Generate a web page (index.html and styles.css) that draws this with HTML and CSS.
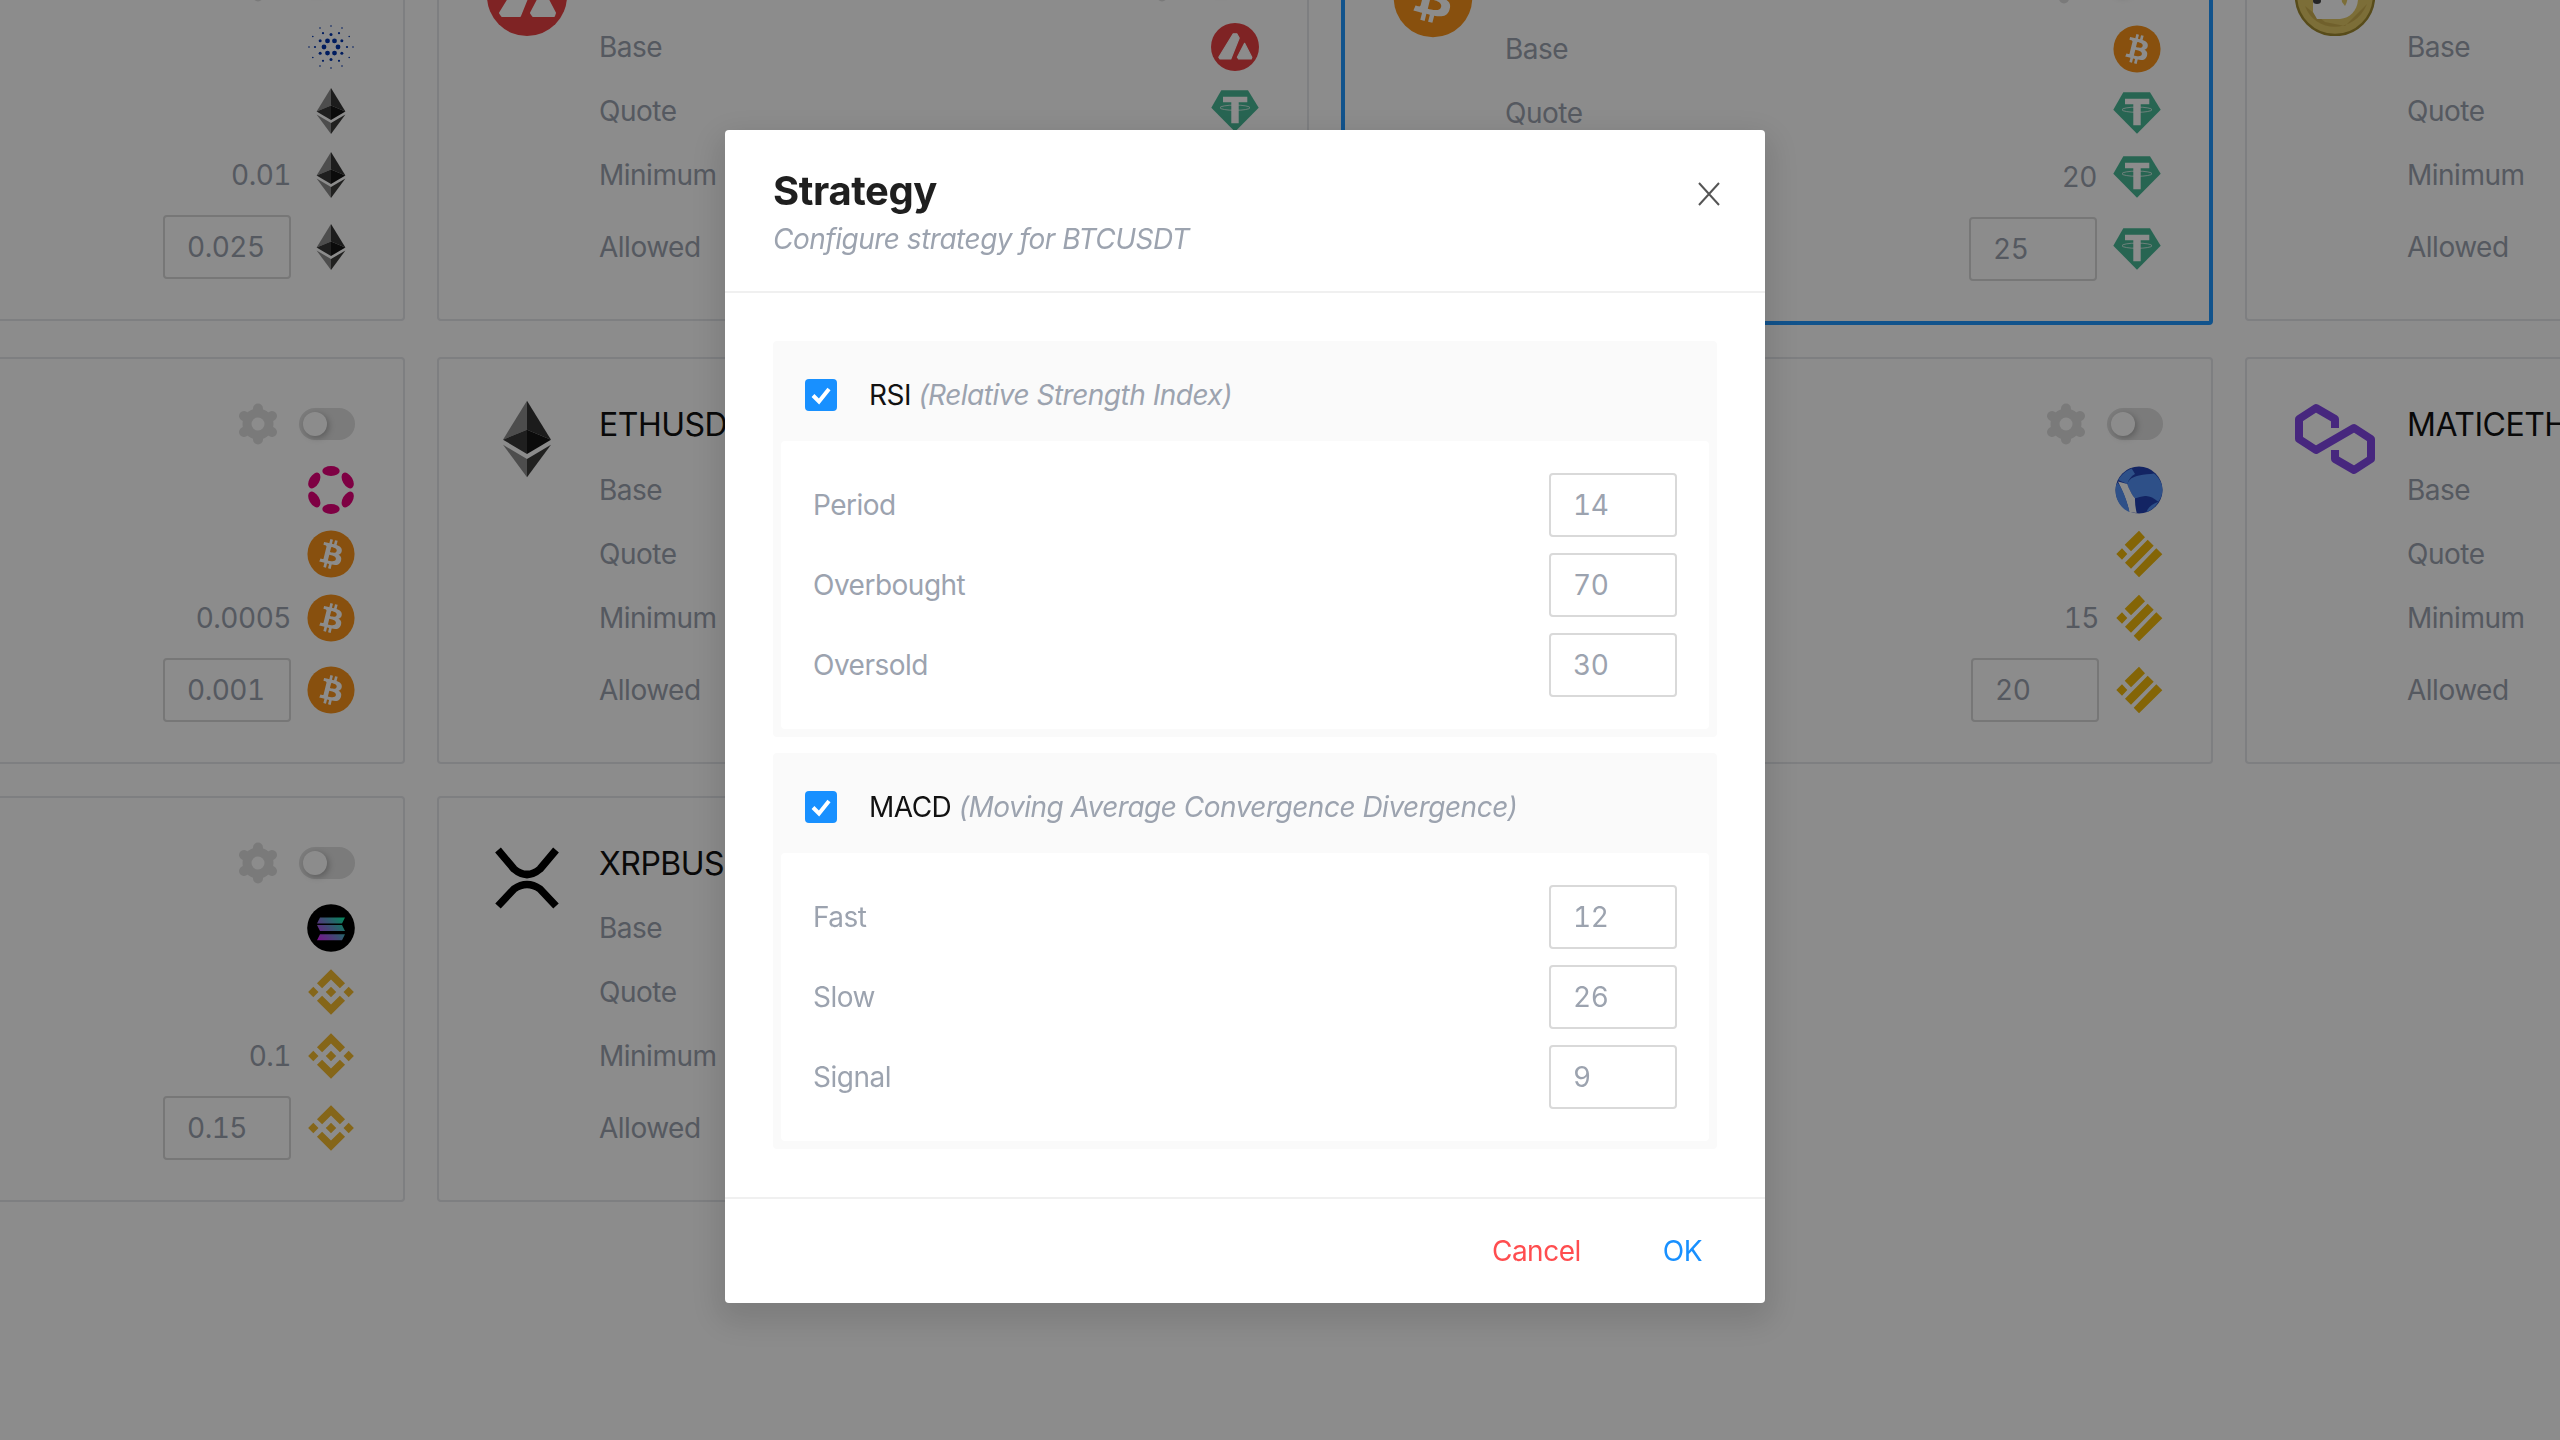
FILE: index.html
```html
<!DOCTYPE html>
<html lang="en">
<head>
    <meta charset="utf-8">
    <title>Strategy</title>
    <link rel="stylesheet" href="styles.css">
</head>
<body>

    <!-- coin icons, used through <use> below -->
    <svg class="sprite" xmlns="http://www.w3.org/2000/svg">
        <defs>
            <linearGradient id="sol_grad" gradientUnits="userSpaceOnUse" x1="38" y1="13" x2="10" y2="36">
                <stop offset="0" stop-color="#00ffa3"/>
                <stop offset="1" stop-color="#dc1fff"/>
            </linearGradient>
        </defs>
        <symbol id="gear" viewBox="0 0 40 42">
            <g stroke="#dfdfdf" stroke-width="10" stroke-linecap="round">
                <line x1="20" y1="21" x2="20" y2="5.500"/>
                <line x1="20" y1="21" x2="20" y2="36.500"/>
                <line x1="20" y1="21" x2="6" y2="13"/>
                <line x1="20" y1="21" x2="34" y2="13"/>
                <line x1="20" y1="21" x2="6" y2="29"/>
                <line x1="20" y1="21" x2="34" y2="29"/>
            </g>
            <circle cx="20" cy="21" r="15.500" fill="#dfdfdf"/>
            <circle cx="20" cy="21" r="6.500" fill="#fff"/>
        </symbol>
        <symbol id="ada" viewBox="0 0 48 48">
            <g fill="#0033ad">
                <circle cx="31" cy="24" r="2.4"/><circle cx="27.5" cy="30.06" r="2.4"/><circle cx="20.5" cy="30.06" r="2.4"/>
                <circle cx="17" cy="24" r="2.4"/><circle cx="20.5" cy="17.94" r="2.4"/><circle cx="27.5" cy="17.94" r="2.4"/>
                <circle cx="34.83" cy="30.25" r="1.5"/><circle cx="24" cy="36.5" r="1.5"/><circle cx="13.17" cy="30.25" r="1.5"/>
                <circle cx="13.17" cy="17.75" r="1.5"/><circle cx="24" cy="11.5" r="1.5"/><circle cx="34.83" cy="17.75" r="1.5"/>
                <circle cx="40" cy="24" r="1.1"/><circle cx="32" cy="37.86" r="1.1"/><circle cx="16" cy="37.86" r="1.1"/>
                <circle cx="8" cy="24" r="1.1"/><circle cx="16" cy="10.14" r="1.1"/><circle cx="32" cy="10.14" r="1.1"/>
                <circle cx="46" cy="24" r=".8"/><circle cx="35" cy="43.05" r=".8"/><circle cx="13" cy="43.05" r=".8"/>
                <circle cx="2" cy="24" r=".8"/><circle cx="13" cy="4.95" r=".8"/><circle cx="35" cy="4.95" r=".8"/>
                <circle cx="42.19" cy="34.5" r=".8"/><circle cx="24" cy="45" r=".8"/><circle cx="5.81" cy="34.5" r=".8"/>
                <circle cx="5.81" cy="13.5" r=".8"/><circle cx="24" cy="3" r=".8"/><circle cx="42.19" cy="13.5" r=".8"/>
            </g>
        </symbol>
        <symbol id="eth" viewBox="0 0 48 48">
            <path fill="#8c8c8c" d="M24 1 9.6 24.4 24 18.4Z"/>
            <path fill="#343434" d="M24 1 38.4 24.4 24 18.4Z"/>
            <path fill="#393939" d="M24 18.4 9.6 24.4 24 33Z"/>
            <path fill="#141414" d="M24 18.4 38.4 24.4 24 33Z"/>
            <path fill="#8c8c8c" d="M9.6 27.5 24 47V36Z"/>
            <path fill="#3c3c3b" d="M38.4 27.5 24 47V36Z"/>
        </symbol>
        <symbol id="dot" viewBox="0 0 48 48">
            <g fill="#e6007a">
                <ellipse cx="24" cy="5" rx="8.7" ry="5"/>
                <ellipse cx="24" cy="43" rx="8.7" ry="5"/>
                <ellipse cx="7.3" cy="14.5" rx="8.7" ry="5" transform="rotate(-60 7.3 14.5)"/>
                <ellipse cx="40.7" cy="14.5" rx="8.7" ry="5" transform="rotate(60 40.7 14.5)"/>
                <ellipse cx="7.3" cy="33.5" rx="8.7" ry="5" transform="rotate(60 7.3 33.5)"/>
                <ellipse cx="40.7" cy="33.5" rx="8.7" ry="5" transform="rotate(-60 40.7 33.5)"/>
            </g>
        </symbol>
        <symbol id="btc" viewBox="0 0 32 32">
            <circle cx="16" cy="16" r="15.7" fill="#f7931a"/>
            <path fill="#fff" d="M23.189 14.02c.314-2.096-1.283-3.223-3.465-3.975l.708-2.84-1.728-.43-.69 2.765c-.454-.114-.92-.22-1.385-.326l.695-2.783L15.596 6l-.708 2.839c-.376-.086-.746-.17-1.104-.26l.002-.009-2.384-.595-.46 1.846s1.283.294 1.256.312c.7.175.826.638.805 1.006l-.806 3.235c.048.012.11.03.18.057l-.183-.045-1.13 4.532c-.086.212-.303.531-.793.41.018.025-1.256-.313-1.256-.313l-.858 1.978 2.25.561c.418.105.828.215 1.231.318l-.715 2.872 1.727.43.708-2.84c.472.127.93.245 1.378.357l-.706 2.828 1.728.43.715-2.866c2.948.558 5.164.333 6.097-2.333.752-2.146-.037-3.385-1.588-4.192 1.13-.26 1.98-1.003 2.207-2.538zm-3.95 5.538c-.533 2.147-4.148.986-5.32.695l.95-3.805c1.172.293 4.929.872 4.37 3.11zm.535-5.569c-.487 1.953-3.495.96-4.47.717l.86-3.45c.975.243 4.118.696 3.61 2.733z"/>
        </symbol>
        <symbol id="usdt" viewBox="0 0 48 48">
            <path fill="#48b896" d="M10.3 3.3H37L47.7 20.7 24 44.7.3 20.7Z"/>
            <path fill="#fff" d="M12 9.7H36.3V15.3H27.7V36.3H20.3V15.3H12Z"/>
            <ellipse cx="24" cy="20.7" rx="15" ry="2.6" fill="none" stroke="#fff" stroke-width=".7"/>
        </symbol>
        <symbol id="bnb" viewBox="5.5 5.5 21 21">
            <path fill="#f3ba2f" d="M12.116 14.404L16 10.52l3.886 3.886 2.26-2.26L16 6l-6.144 6.144 2.26 2.26zM6 16l2.26-2.26L10.52 16l-2.26 2.26L6 16zm6.116 1.596L16 21.48l3.886-3.886 2.26 2.259L16 26l-6.144-6.144-.003-.003 2.263-2.257zM21.48 16l2.26-2.26L26 16l-2.26 2.26L21.48 16zm-3.188-.002h.002V16L16 18.294l-2.291-2.29-.004-.004.004-.003.401-.402.195-.195L16 13.706l2.293 2.293z"/>
        </symbol>
        <symbol id="busd" viewBox="0 0 48 48">
            <path fill="#f0b90b" d="M24 .7 30 7.3 16 21.3 9.7 14.7ZM7 18.3 12.3 24 7 29.7 1.3 24ZM32.7 9.7 38.7 15.7 16 38.7 10 32.7ZM41.3 18.3 47.3 24.3 24 47.3 18.7 41.7Z"/>
        </symbol>
        <symbol id="luna" viewBox="0 0 48 48">
            <circle cx="24" cy="24" r="23.5" fill="#2443b4"/>
            <path fill="#5493f7" d="M12.3 18C14 13 18 10.7 24 9.500 29 8.500 35 8 39 7.500 44 11.500 47.500 17 47.500 24 47.500 28 46 32.500 43.300 35.700 39 32 34 29.500 30 30 26 30.500 23 31.500 20 32.300 17 29 14 23 12.300 18Z"/>
            <path fill="#5493f7" d="M3.300 14C6 9 10 5 16.700 2.400L20 8C16 10 14 13 12.300 18Z"/>
            <path fill="#fff" d="M3 15.500 12.300 18C14 23 17 29 20 32.300 19.800 37 20.500 42 21.700 47L14.300 46C13 38 9 28 3 15.500Z"/>
            <path fill="#5493f7" d="M2.300 16.500C7 21 12 35 14.500 46 6 43 .5 34 .5 24 .5 21 1.200 18.500 2.300 16.500Z"/>
            <path fill="#5493f7" d="M43.300 35.700C41 40 37 44 31.500 46 33 41 38 37.500 43.300 35.700Z"/>
        </symbol>
        <symbol id="sol" viewBox="0 0 48 48">
            <circle cx="24" cy="24" r="23.8" fill="#000"/>
            <path fill="url(#sol_grad)" d="M13 13.600H38L35 19.600H10ZM10 21H35L38 27H13ZM13 30.300H38L35 36.300H10Z"/>
        </symbol>
        <symbol id="avax" viewBox="0 0 80 80">
            <circle cx="40" cy="40" r="40" fill="#e84142"/>
            <path fill="#fff" stroke="#fff" stroke-width="2" stroke-linejoin="round" d="M37 18H43L47 25 33 60H15L13 57ZM56 34 68 57 67 60H46L44 57Z"/>
        </symbol>
        <symbol id="doge" viewBox="0 0 80 80">
            <circle cx="40" cy="40" r="39" fill="#e2c866" stroke="#a08a30" stroke-width="2.500"/>
            <path fill="#cdb050" d="M10 50C20 78 60 78 72 48L50 70 30 66Z"/>
            <path fill="#fff" d="M18 18H42C56 18 64 30 63 44 62 55 55 62 45 63H22L18 56Z"/>
            <path fill="#e2c866" d="M45 30C52 32 55 42 50 50L47 46Z"/>
            <ellipse cx="22" cy="45" rx="4" ry="3" fill="#444"/>
        </symbol>
        <symbol id="matic" viewBox="0 0 80 80">
            <path fill="none" stroke="#8247e5" stroke-width="8" stroke-linejoin="round" d="M40 29V20L21 9 4 20V40L21 51 59 29 76 40V60L59 71 40 60V51"/>
        </symbol>
        <symbol id="xrp" viewBox="0 0 80 80">
            <g fill="none" stroke="#000" stroke-width="7.500">
                <path d="M11 12 27 31Q40 42 53 31L69 12"/>
                <path d="M11 68 27 51Q40 42 53 51L69 68"/>
            </g>
        </symbol>
    </svg>

    <div class="board">

        <!-- row 1 -->
        <div class="card">
            <div class="card-logo"></div>
            <div class="card-body">
                <div class="head">
                    <div class="ctrl"><svg class="gear"><use href="#gear"/></svg><div class="toggle"><div class="knob"></div></div></div>
                </div>
                <div class="line"><div class="right"><svg class="coin"><use href="#ada"/></svg></div></div>
                <div class="line"><div class="right"><svg class="coin"><use href="#eth"/></svg></div></div>
                <div class="line"><div class="right"><span class="val">0.01</span><svg class="coin"><use href="#eth"/></svg></div></div>
                <div class="line line-input"><div class="right"><input class="field" type="text" value="0.025"><svg class="coin"><use href="#eth"/></svg></div></div>
            </div>
        </div>

        <div class="card">
            <div class="card-logo"><svg class="logo"><use href="#avax"/></svg></div>
            <div class="card-body">
                <div class="head">
                    <div class="ctrl"><svg class="gear"><use href="#gear"/></svg><div class="toggle"><div class="knob"></div></div></div>
                </div>
                <div class="line"><span class="lbl">Base</span><div class="right"><svg class="coin"><use href="#avax"/></svg></div></div>
                <div class="line"><span class="lbl">Quote</span><div class="right"><svg class="coin"><use href="#usdt"/></svg></div></div>
                <div class="line"><span class="lbl">Minimum</span></div>
                <div class="line line-input"><span class="lbl">Allowed</span></div>
            </div>
        </div>

        <div class="card card-active">
            <div class="card-logo"><svg class="logo"><use href="#btc"/></svg></div>
            <div class="card-body">
                <div class="head">
                    <div class="ctrl"><svg class="gear"><use href="#gear"/></svg><div class="toggle"><div class="knob"></div></div></div>
                </div>
                <div class="line"><span class="lbl">Base</span><div class="right"><svg class="coin"><use href="#btc"/></svg></div></div>
                <div class="line"><span class="lbl">Quote</span><div class="right"><svg class="coin"><use href="#usdt"/></svg></div></div>
                <div class="line"><div class="right"><span class="val">20</span><svg class="coin"><use href="#usdt"/></svg></div></div>
                <div class="line line-input"><div class="right"><input class="field" type="text" value="25"><svg class="coin"><use href="#usdt"/></svg></div></div>
            </div>
        </div>

        <div class="card">
            <div class="card-logo"><svg class="logo"><use href="#doge"/></svg></div>
            <div class="card-body">
                <div class="head"></div>
                <div class="line"><span class="lbl">Base</span></div>
                <div class="line"><span class="lbl">Quote</span></div>
                <div class="line"><span class="lbl">Minimum</span></div>
                <div class="line line-input"><span class="lbl">Allowed</span></div>
            </div>
        </div>

        <!-- row 2 -->
        <div class="card">
            <div class="card-logo"></div>
            <div class="card-body">
                <div class="head">
                    <div class="ctrl"><svg class="gear"><use href="#gear"/></svg><div class="toggle"><div class="knob"></div></div></div>
                </div>
                <div class="line"><div class="right"><svg class="coin"><use href="#dot"/></svg></div></div>
                <div class="line"><div class="right"><svg class="coin"><use href="#btc"/></svg></div></div>
                <div class="line"><div class="right"><span class="val">0.0005</span><svg class="coin"><use href="#btc"/></svg></div></div>
                <div class="line line-input"><div class="right"><input class="field" type="text" value="0.001"><svg class="coin"><use href="#btc"/></svg></div></div>
            </div>
        </div>

        <div class="card">
            <div class="card-logo"><svg class="logo"><use href="#eth"/></svg></div>
            <div class="card-body">
                <div class="head"><span class="name">ETHUSDT</span></div>
                <div class="line"><span class="lbl">Base</span></div>
                <div class="line"><span class="lbl">Quote</span></div>
                <div class="line"><span class="lbl">Minimum</span></div>
                <div class="line line-input"><span class="lbl">Allowed</span></div>
            </div>
        </div>

        <div class="card">
            <div class="card-logo"></div>
            <div class="card-body">
                <div class="head">
                    <div class="ctrl"><svg class="gear"><use href="#gear"/></svg><div class="toggle"><div class="knob"></div></div></div>
                </div>
                <div class="line"><div class="right"><svg class="coin"><use href="#luna"/></svg></div></div>
                <div class="line"><div class="right"><svg class="coin"><use href="#busd"/></svg></div></div>
                <div class="line"><div class="right"><span class="val">15</span><svg class="coin"><use href="#busd"/></svg></div></div>
                <div class="line line-input"><div class="right"><input class="field" type="text" value="20"><svg class="coin"><use href="#busd"/></svg></div></div>
            </div>
        </div>

        <div class="card">
            <div class="card-logo"><svg class="logo"><use href="#matic"/></svg></div>
            <div class="card-body">
                <div class="head"><span class="name">MATICETH</span></div>
                <div class="line"><span class="lbl">Base</span></div>
                <div class="line"><span class="lbl">Quote</span></div>
                <div class="line"><span class="lbl">Minimum</span></div>
                <div class="line line-input"><span class="lbl">Allowed</span></div>
            </div>
        </div>

        <!-- row 3 -->
        <div class="card card-low">
            <div class="card-logo"></div>
            <div class="card-body">
                <div class="head">
                    <div class="ctrl"><svg class="gear"><use href="#gear"/></svg><div class="toggle"><div class="knob"></div></div></div>
                </div>
                <div class="line"><div class="right"><svg class="coin"><use href="#sol"/></svg></div></div>
                <div class="line"><div class="right"><svg class="coin"><use href="#bnb"/></svg></div></div>
                <div class="line"><div class="right"><span class="val">0.1</span><svg class="coin"><use href="#bnb"/></svg></div></div>
                <div class="line line-input"><div class="right"><input class="field" type="text" value="0.15"><svg class="coin"><use href="#bnb"/></svg></div></div>
            </div>
        </div>

        <div class="card card-low">
            <div class="card-logo"><svg class="logo"><use href="#xrp"/></svg></div>
            <div class="card-body">
                <div class="head"><span class="name">XRPBUSD</span></div>
                <div class="line"><span class="lbl">Base</span></div>
                <div class="line"><span class="lbl">Quote</span></div>
                <div class="line"><span class="lbl">Minimum</span></div>
                <div class="line line-input"><span class="lbl">Allowed</span></div>
            </div>
        </div>
    </div>

    <div class="mask"></div>

    <div class="modal">
        <div class="modal-head">
            <div class="modal-title">Strategy</div>
            <div class="modal-sub">Configure strategy for BTCUSDT</div>
            <svg class="close" viewBox="0 0 22 24"><path d="M1 1 21 23M21 1 1 23"/></svg>
        </div>

        <div class="modal-body">
            <div class="section">
                <div class="section-head">
                    <span class="check"><svg viewBox="0 0 32 32"><path d="M8 16.500 14 22.500 24 10"/></svg></span>
                    <span class="section-name">RSI <i>(Relative Strength Index)</i></span>
                </div>
                <div class="section-inner">
                    <div class="row"><span>Period</span><input class="field" type="text" value="14"></div>
                    <div class="row"><span>Overbought</span><input class="field" type="text" value="70"></div>
                    <div class="row"><span>Oversold</span><input class="field" type="text" value="30"></div>
                </div>
            </div>

            <div class="section">
                <div class="section-head">
                    <span class="check"><svg viewBox="0 0 32 32"><path d="M8 16.500 14 22.500 24 10"/></svg></span>
                    <span class="section-name">MACD <i>(Moving Average Convergence Divergence)</i></span>
                </div>
                <div class="section-inner">
                    <div class="row"><span>Fast</span><input class="field" type="text" value="12"></div>
                    <div class="row"><span>Slow</span><input class="field" type="text" value="26"></div>
                    <div class="row"><span>Signal</span><input class="field" type="text" value="9"></div>
                </div>
            </div>
        </div>

        <div class="modal-foot">
            <button class="link link-cancel">Cancel</button>
            <button class="link link-ok">OK</button>
        </div>
    </div>

</body>
</html>
```

FILE: styles.css
```css
html, body{
    height: 100%;
}

body{
    margin: 0;
    overflow: hidden;
    background-color: #fff;
    font-family: Inter, "Noto Sans", sans-serif;
    font-size: 28px;
    letter-spacing: -0.5px;
    color: #9ca3af;
}

.sprite{
    position: absolute;
    width: 0;
    height: 0;
}

/* the grid runs off the screen at the top and on the left */
.board{
    display: grid;
    grid-template-columns: repeat(4, 872px);
    gap: 32px;
    align-items: start;
    margin: -86px 0 0 -467px;
}

.card{
    --head: 51px;
    display: flex;
    gap: 32px;
    box-sizing: border-box;
    padding: 40px 48px;
    border: 2px solid #e5e7eb;
    border-radius: 4px;
}

.card-low{
    --head: 50px;
}

.card-active{
    border: 4px solid #2097ff;
}

.card-logo{
    width: 80px;
    height: 80px;
    flex: none;
}

.logo{
    display: block;
    width: 80px;
    height: 80px;
}

.card-body{
    flex: 1;
    min-width: 0;
    display: flex;
    flex-direction: column;
    gap: 16px;
}

.head{
    height: var(--head);
    display: flex;
    align-items: center;
    justify-content: space-between;
}

.name{
    font-size: 32px;
    color: #111;
    white-space: nowrap;
}

.ctrl{
    margin-left: auto;
    margin-bottom: 1px;
    display: flex;
    align-items: center;
    gap: 21px;
}

.gear{
    display: block;
    width: 40px;
    height: 42px;
}

.toggle{
    box-sizing: border-box;
    width: 56px;
    height: 32px;
    padding: 4px;
    border-radius: 16px;
    background-color: #e0e0e0;
}

.knob{
    width: 24px;
    height: 24px;
    border-radius: 50%;
    background-color: #fff;
    box-shadow: 2px 2px 6px rgba(0, 0, 0, 0.25);
}

.line{
    height: 48px;
    display: flex;
    align-items: center;
}

.line-input{
    height: 64px;
}

.right{
    margin-left: auto;
    display: flex;
    align-items: center;
    gap: 16px;
}

.coin{
    display: block;
    width: 48px;
    height: 48px;
}

.val{
    font-variant-numeric: tabular-nums;
}

.field{
    box-sizing: border-box;
    width: 128px;
    height: 64px;
    padding: 0 22px;
    border: 2px solid #d9d9d9;
    border-radius: 4px;
    background: #fff;
    font-family: inherit;
    font-size: 28px;
    letter-spacing: -0.5px;
    font-variant-numeric: tabular-nums;
    color: #9ca3af;
}

.mask{
    position: fixed;
    top: 0;
    left: 0;
    right: 0;
    bottom: 0;
    background-color: rgba(0, 0, 0, 0.45);
}

.modal{
    position: fixed;
    top: 130px;
    left: 725px;
    width: 1040px;
    border-radius: 4px;
    background-color: #fff;
    box-shadow: 0 12px 32px 8px rgba(0, 0, 0, 0.12);
}

.modal-head{
    position: relative;
    padding: 37px 48px 32px;
    border-bottom: 2px solid #f0f0f0;
}

.modal-title{
    height: 48px;
    line-height: 48px;
    font-size: 40px;
    font-weight: 700;
    letter-spacing: -0.4px;
    color: #1f1f1f;
}

.modal-sub{
    margin-top: 4px;
    height: 40px;
    line-height: 40px;
    font-style: italic;
}

.close{
    position: absolute;
    top: 52px;
    right: 45px;
    width: 22px;
    height: 24px;
    fill: none;
    stroke: #555;
    stroke-width: 2;
}

.modal-body{
    padding: 48px 48px;
    display: flex;
    flex-direction: column;
    gap: 16px;
}

.section{
    padding: 0 8px 8px;
    border-radius: 4px;
    background-color: #fafafa;
}

.section-head{
    box-sizing: border-box;
    height: 100px;
    padding: 8px 24px 0;
    display: flex;
    align-items: center;
    gap: 32px;
}

.check{
    width: 32px;
    height: 32px;
    flex: none;
    border-radius: 4px;
    background-color: #1890ff;
}

.check svg{
    display: block;
    fill: none;
    stroke: #fff;
    stroke-width: 4;
}

.section-name{
    color: #111;
}

.section-name i{
    color: #9ca3af;
}

.section-inner{
    padding: 32px;
    display: flex;
    flex-direction: column;
    gap: 16px;
    border-radius: 4px;
    background-color: #fff;
}

.row{
    display: flex;
    align-items: center;
    justify-content: space-between;
}

.modal-foot{
    height: 104px;
    padding-right: 47px;
    display: flex;
    align-items: center;
    justify-content: flex-end;
    gap: 50px;
    border-top: 2px solid #f0f0f0;
}

.link{
    padding: 0 16px;
    border: 0;
    background: none;
    font-family: inherit;
    font-size: 28px;
    letter-spacing: -0.5px;
}

.link-cancel{
    color: #ff4d4f;
}

.link-ok{
    color: #1890ff;
}
```
